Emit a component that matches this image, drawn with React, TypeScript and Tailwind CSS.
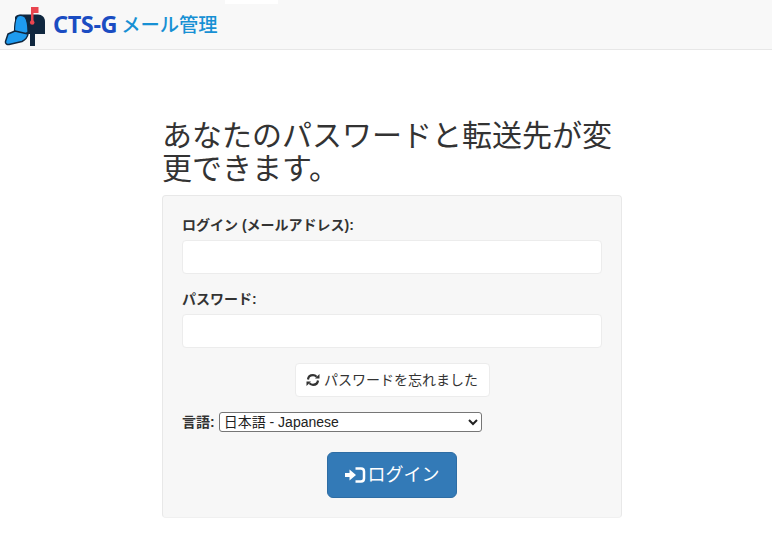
const bodyFont = "font-['Liberation_Sans','Noto_Sans_CJK_JP',sans-serif]"

function MailboxLogo() {
  return (
    <svg width="42" height="44" viewBox="0 0 42 44" className="shrink-0">
      <path d="M26 28h5v15h-5z" fill="#10273f" />
      <path d="M11 14c1-2 4-2.500 6-2.500h17c4 0 7 3 7 7V31H21l-10-2z" fill="#10273f" />
      <path d="M27 4h2.500v15H27z" fill="#e9454f" />
      <path d="M27 4h7.500v6H27z" fill="#e9454f" />
      <circle cx="28.200" cy="19.500" r="2.300" fill="#e9454f" />
      <path d="M10.500 29c0-5 .5-12 2.500-15 1.500-2.300 6-2.300 8 0 2 3 3 10 3 15l-4 3-9.500-1z" fill="#1e9bf0" stroke="#10273f" strokeWidth="1.200" />
      <path d="M4 31l7-3 13 3c-.5 3-3 6-6 7.500l-13 3c-2 .3-4-1-3.500-3z" fill="#1e9bf0" stroke="#10273f" strokeWidth="1.500" strokeLinejoin="round" />
    </svg>
  )
}

function RefreshIcon() {
  return (
    <svg width="14" height="14" viewBox="0 0 14 14" className="shrink-0">
      <path d="M2 6.500C2.300 4 4.300 2.200 7 2.200c1.500 0 2.700.6 3.600 1.500" fill="none" stroke="#333" strokeWidth="2.200" />
      <path d="M9 5.500h4.500V1z" fill="#333" />
      <path d="M12 7.500c-.3 2.500-2.300 4.300-5 4.300-1.500 0-2.700-.6-3.600-1.500" fill="none" stroke="#333" strokeWidth="2.200" />
      <path d="M5 8.500H.5V13z" fill="#333" />
    </svg>
  )
}

function LoginIcon() {
  return (
    <svg width="21" height="18" viewBox="0 0 21 18" className="shrink-0">
      <path d="M0 7h4.500V3.500L11 9l-6.500 5.500V11H0z" fill="#fff" />
      <path d="M10.500 2.500h5.500c2 0 3 1.200 3 3v7c0 1.800-1 3-3 3h-5.500" fill="none" stroke="#fff" strokeWidth="2.500" />
    </svg>
  )
}

export default function App() {
  return (
    <div className={`min-h-screen bg-white text-[14px] text-[#333] ${bodyFont}`}>
      <nav className="relative flex h-[50px] items-center border-b border-[#e7e7e7] bg-[#f8f8f8] pl-[4px]">
        <div className="absolute left-[225px] top-0 h-[4px] w-[53px] bg-white" />
        <MailboxLogo />
        <span className="ml-[7px] text-[23.500px] font-bold tracking-[-0.4px] text-[#1a4cc2] font-['Noto_Sans',sans-serif]">CTS-G</span>
        <span className="ml-[4px] text-[19.300px] font-medium text-[#1790d4] font-['Noto_Sans_CJK_JP',sans-serif]">メール管理</span>
      </nav>

      <main className="ml-[162px] w-[460px] pt-[69px]">
        <h3 className="mb-[10px] text-[30px] leading-[33px] text-[#333]">あなたのパスワードと転送先が変更できます。</h3>
        <form className="h-[323px] rounded-[4px] border border-[#e8e8e8] border-b-[#f0f0f0] bg-[#f7f7f7] px-[19px] pt-[19px]">
          <label className="mb-[5px] block font-bold leading-[20px]">ログイン (メールアドレス):</label>
          <input type="text" className="block h-[34px] w-full rounded-[4px] border border-[#ececec] bg-white" />
          <label className="mb-[5px] mt-[15px] block font-bold leading-[20px]">パスワード:</label>
          <input type="password" className="block h-[34px] w-full rounded-[4px] border border-[#ececec] bg-white" />
          <div className="mt-[15px] flex justify-center">
            <button type="button" className="flex h-[34px] w-[195px] items-center justify-center gap-[4px] rounded-[4px] border border-[#ececec] bg-white">
              <RefreshIcon />
              パスワードを忘れました
            </button>
          </div>
          <div className="mt-[15px] flex h-[20px] items-center">
            <label className="font-bold">言語:</label>
            <select className="ml-[4px] h-[20px] w-[263px] rounded-[3px] border border-[#767676] bg-white text-[14px] text-[#222]">
              <option>日本語 - Japanese</option>
            </select>
          </div>
          <div className="mt-[20px] flex justify-center">
            <button type="button" className="flex h-[46px] w-[130px] items-center justify-center gap-[2px] rounded-[6px] border border-[#2e6da4] bg-[#337ab7] text-[18px] text-white">
              <LoginIcon />
              ログイン
            </button>
          </div>
        </form>
      </main>
    </div>
  )
}
